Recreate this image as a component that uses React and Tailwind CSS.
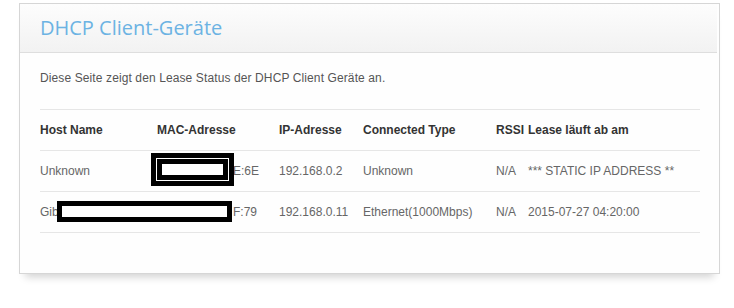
export default function App() {
  const th = "text-left font-bold text-[#333] h-[41px] p-0 align-middle border-b border-[#e6e6e6]";
  const td = "text-left text-[#666] h-[41px] p-0 align-middle border-b border-[#e6e6e6] whitespace-nowrap";
  return (
    <div className="w-[734px] h-[308px] bg-white pl-[19px] pt-[3px]" style={{ fontFamily: '"Liberation Sans", Arial, sans-serif' }}>
      <div className="relative w-[701px] h-[271px] border border-[#d6d6d6] bg-[#fefefe] shadow-[0_9px_8px_-6px_rgba(0,0,0,0.18)]">
        <div className="h-[49px] border-b border-[#dedede] bg-gradient-to-b from-[#fdfdfd] to-[#f2f2f2] flex items-center pl-[20px] mr-[2px]">
          <h1 className="text-[20px] font-medium text-[#6cb3e3]" style={{ fontFamily: '"Open Sans", sans-serif' }}>DHCP Client-Geräte</h1>
        </div>
        <div className="pl-[20px] pr-[19px] pt-[17px]">
          <p className="text-[12px] leading-[16px] text-[#555] tracking-[0.11px]">Diese Seite zeigt den Lease Status der DHCP Client Geräte an.</p>
          <table className="mt-[23px] w-[660px] table-fixed border-collapse border-t border-[#e6e6e6] text-[12px]">
            <colgroup>
              <col className="w-[117px]" />
              <col className="w-[122px]" />
              <col className="w-[84px]" />
              <col className="w-[133px]" />
              <col className="w-[32px]" />
              <col />
            </colgroup>
            <thead>
              <tr>
                <th className={th}>Host Name</th>
                <th className={th}>MAC-Adresse</th>
                <th className={th}>IP-Adresse</th>
                <th className={th}>Connected Type</th>
                <th className={th}>RSSI</th>
                <th className={th}>Lease läuft ab am</th>
              </tr>
            </thead>
            <tbody>
              <tr>
                <td className={td}>Unknown</td>
                <td className={td + " text-right pr-[20px]"}>E:6E</td>
                <td className={td}>192.168.0.2</td>
                <td className={td}>Unknown</td>
                <td className={td}>N/A</td>
                <td className={td}>*** STATIC IP ADDRESS **</td>
              </tr>
              <tr>
                <td className={td}>Gib</td>
                <td className={td + " text-right pr-[22px]"}>F:79</td>
                <td className={td}>192.168.0.11</td>
                <td className={td}>Ethernet(1000Mbps)</td>
                <td className={td}>N/A</td>
                <td className={td}>2015-07-27 04:20:00</td>
              </tr>
            </tbody>
          </table>
        </div>
        {/* redaction overlays */}
        <div className="absolute left-[131px] top-[149px] w-[83px] h-[33px] bg-black p-[5px]">
          <div className="w-full h-full border border-white p-[5px]">
            <div className="w-full h-full bg-white" />
          </div>
        </div>
        <div className="absolute left-[37px] top-[197px] w-[175px] h-[21px] bg-black p-[5px]">
          <div className="w-full h-full bg-white" />
        </div>
      </div>
    </div>
  );
}
